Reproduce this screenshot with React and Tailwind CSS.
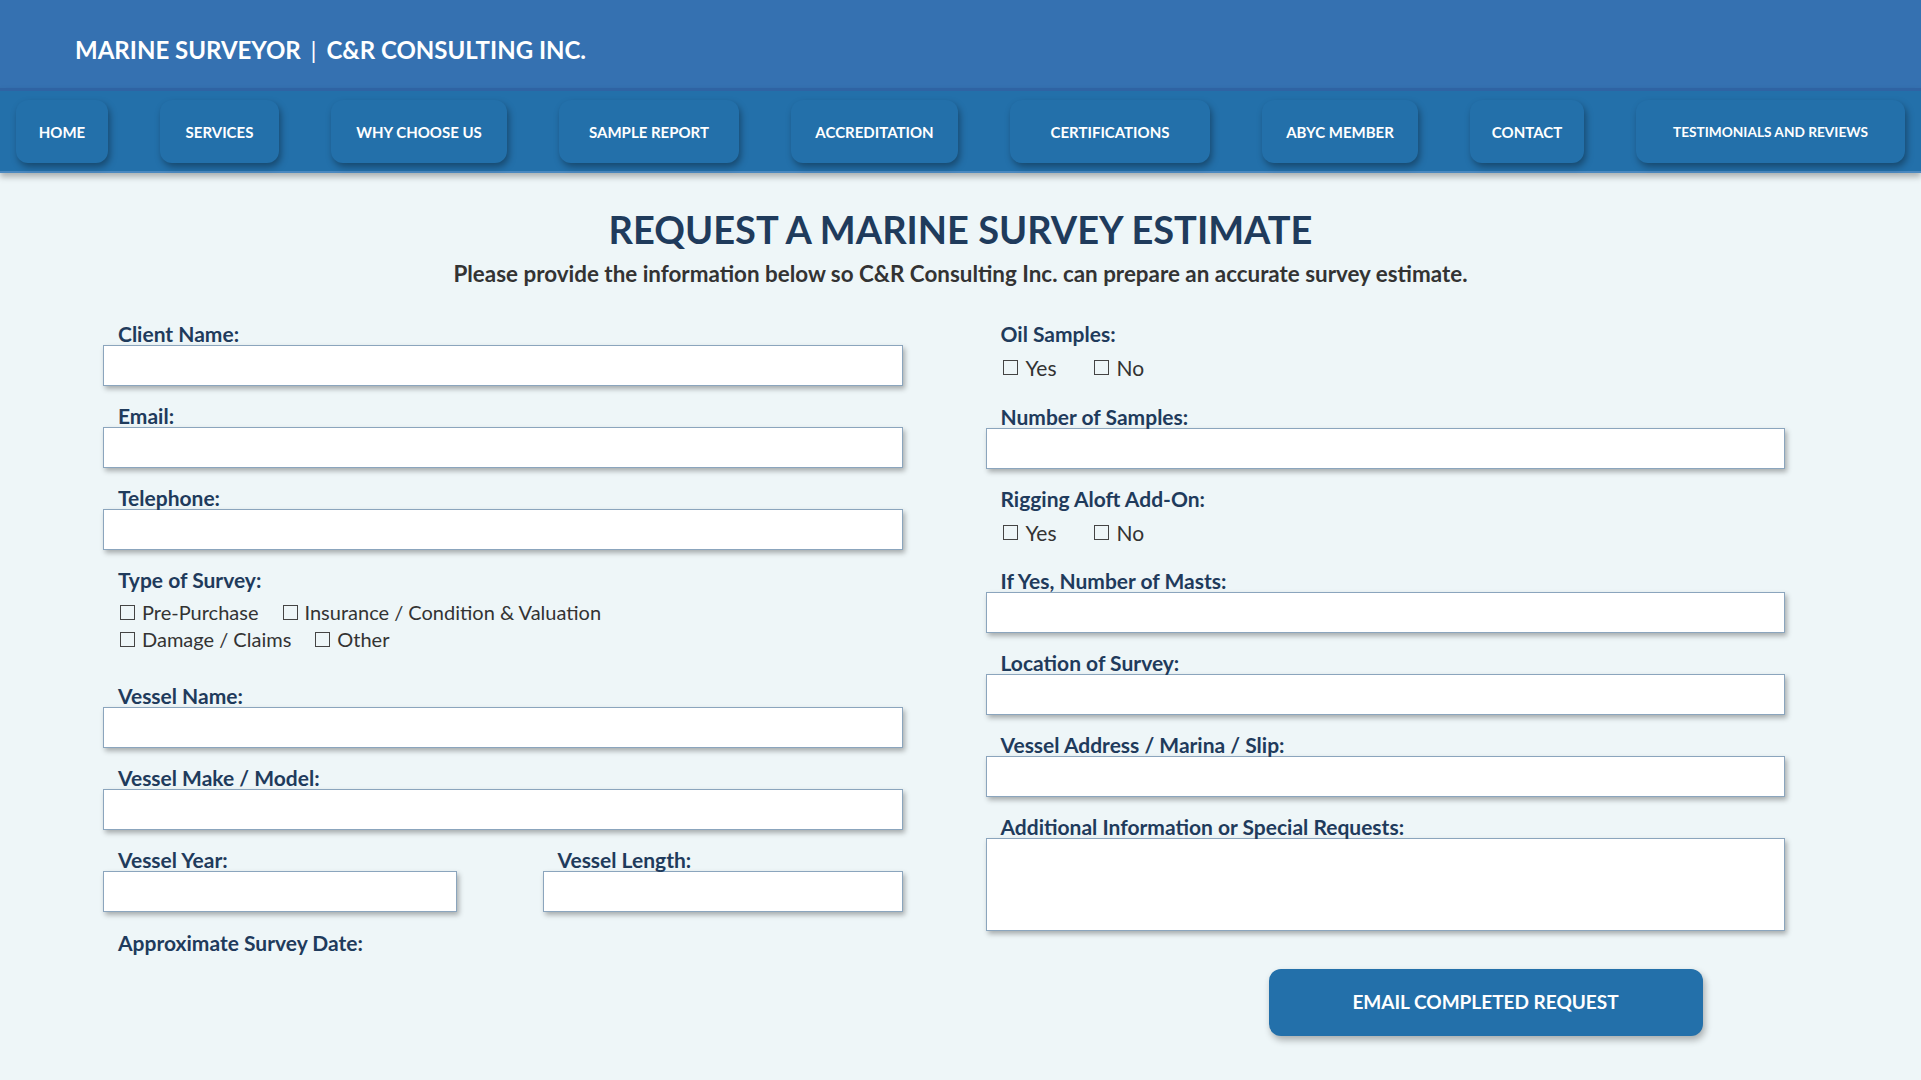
import React from "react"

const NavItems = [
  { label: "HOME", w: "w-[92px]" },
  { label: "SERVICES", w: "w-[119px]" },
  { label: "WHY CHOOSE US", w: "w-[176px]" },
  { label: "SAMPLE REPORT", w: "w-[180px]" },
  { label: "ACCREDITATION", w: "w-[167px]" },
  { label: "CERTIFICATIONS", w: "w-[200px]" },
  { label: "ABYC MEMBER", w: "w-[156px]" },
  { label: "CONTACT", w: "w-[114px]" },
  { label: "TESTIMONIALS AND REVIEWS", w: "w-[269px]", small: true }
]

const Label = ({ children }) => (
  <div className="h-[23px] pl-[15px] text-[21px] leading-[24px] font-bold text-[#1f3b5c] whitespace-nowrap">
    { children }
  </div>
)

const Input = ({ className = "" }) => (
  <input type="text"
    className={ `block w-full h-[41px] bg-white border border-[#8ba5bd] shadow-[2px_3px_5px_rgba(0,0,0,0.3)] outline-none ${ className }` }
  />
)

const Field = ({ label, className = "mb-[18px]" }) => (
  <div className={ className }>
    <Label>{ label }</Label>
    <Input />
  </div>
)

const Check = ({ children, gap = "gap-[7px]" }) => (
  <label className={ `flex items-center ${ gap } whitespace-nowrap` }>
    <span className="inline-block w-[15px] h-[15px] border border-[#444] bg-transparent" />
    <span>{ children }</span>
  </label>
)

const CheckRow = ({ children, gap = "gap-[24px]", className = "" }) => (
  <div className={ `flex items-center ${ gap } pl-[17px] h-[27px] text-[20px] leading-[27px] text-[#333] ${ className }` }>
    { children }
  </div>
)

const App = () => {
  return (
    <div className="min-h-screen bg-[#eef6f8] font-['Lato',sans-serif]">

      <header className="h-[88px] bg-[#3571b1] flex items-center pl-[75px] pt-[12px]">
        <h1 className="text-[24px] font-bold text-white">
          MARINE SURVEYOR <span className="mx-[4px] font-normal">|</span> C&amp;R CONSULTING INC.
        </h1>
      </header>

      <nav className="relative h-[85px] bg-[#2370aa] border-t-[3px] border-b-[2px] border-t-[#2f63a3] border-b-[#4b89c0] shadow-[0_4px_6px_rgba(0,0,0,0.28)] flex items-start pt-[9px] pl-[16px] gap-[52px]">
        { NavItems.map(n => (
            <button key={ n.label }
              className={ `${ n.w } h-[63px] rounded-[12px] bg-[#2370aa] text-white font-bold ${ n.small ? "text-[13.7px]" : "text-[15px]" } shadow-[2px_4px_7px_rgba(0,0,0,0.35)] flex items-center justify-center whitespace-nowrap pt-[1px]` }
            >
              { n.label }
            </button>
          ))
        }
      </nav>

      <main className="pb-[40px]">
        <h2 className="mt-[33px] text-center text-[38px] leading-[46px] font-bold text-[#1f3b5c]">
          REQUEST A MARINE SURVEY ESTIMATE
        </h2>
        <p className="mt-[10px] text-center text-[22.4px] leading-[24px] font-bold text-[#333]">
          Please provide the information below so C&amp;R Consulting Inc. can prepare an accurate survey estimate.
        </p>

        <form className="mt-[36px] ml-[103px] w-[1682px] grid grid-cols-2 gap-x-[83px]"
          onSubmit={ e => e.preventDefault() }
        >
          {/* left column */}
          <div>
            <Field label="Client Name:" />
            <Field label="Email:" />
            <Field label="Telephone:" />

            <Label>Type of Survey:</Label>
            <CheckRow className="mt-[8px]">
              <Check>Pre-Purchase</Check>
              <Check>Insurance / Condition &amp; Valuation</Check>
            </CheckRow>
            <CheckRow>
              <Check>Damage / Claims</Check>
              <Check>Other</Check>
            </CheckRow>

            <Field label="Vessel Name:" className="mt-[31px] mb-[18px]" />
            <Field label="Vessel Make / Model:" />

            <div className="flex justify-between mb-[19px]">
              <div className="w-[354px]">
                <Label>Vessel Year:</Label>
                <Input />
              </div>
              <div className="w-[360px]">
                <Label>Vessel Length:</Label>
                <Input />
              </div>
            </div>

            <Label>Approximate Survey Date:</Label>
          </div>

          {/* right column */}
          <div>
            <Label>Oil Samples:</Label>
            <CheckRow gap="gap-[37px]" className="mt-[9px] mb-[24px] text-[21px]">
              <Check gap="gap-[8px]">Yes</Check>
              <Check gap="gap-[8px]">No</Check>
            </CheckRow>

            <Field label="Number of Samples:" />

            <Label>Rigging Aloft Add-On:</Label>
            <CheckRow gap="gap-[37px]" className="mt-[9px] mb-[23px] text-[21px]">
              <Check gap="gap-[8px]">Yes</Check>
              <Check gap="gap-[8px]">No</Check>
            </CheckRow>

            <Field label="If Yes, Number of Masts:" />
            <Field label="Location of Survey:" />
            <Field label="Vessel Address / Marina / Slip:" />

            <div>
              <Label>Additional Information or Special Requests:</Label>
              <textarea className="block w-full h-[93px] resize-none bg-white border border-[#8ba5bd] shadow-[2px_3px_5px_rgba(0,0,0,0.3)] outline-none" />
            </div>

            <button type="submit"
              className="mt-[38px] ml-[283px] w-[434px] h-[67px] rounded-[12px] bg-[#2370aa] text-white text-[19px] font-bold shadow-[2px_4px_7px_rgba(0,0,0,0.3)]"
            >
              EMAIL COMPLETED REQUEST
            </button>
          </div>
        </form>
      </main>

    </div>
  )
}

export default App
